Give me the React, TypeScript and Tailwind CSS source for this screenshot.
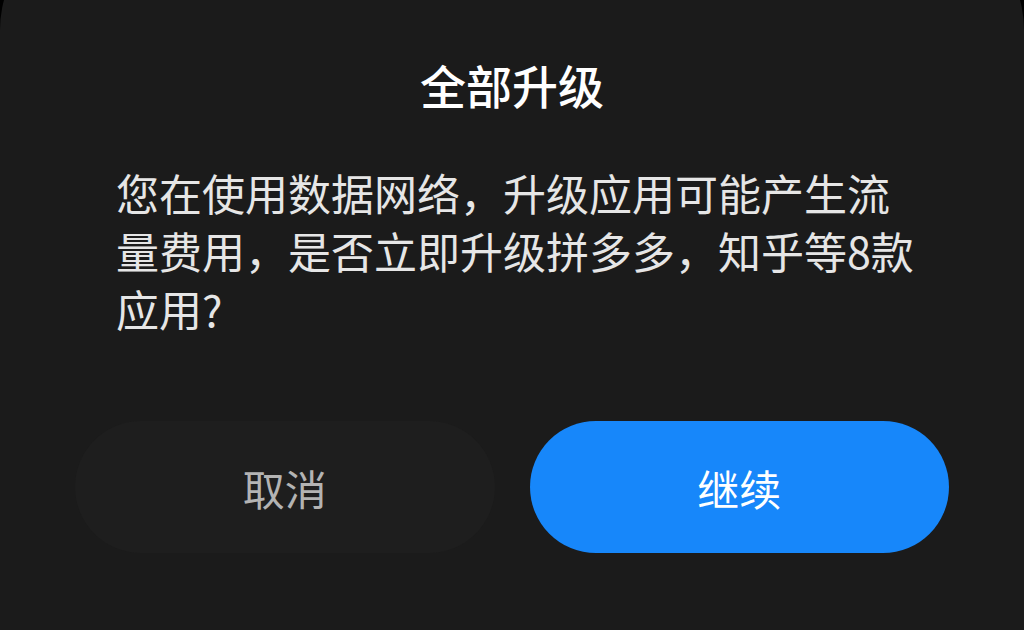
import React from 'react';

const App: React.FC = () => {
  return (
    <div className="w-[1024px] h-[630px] bg-black overflow-hidden" style={{ fontFamily: '"Noto Sans CJK SC", "Noto Sans", sans-serif' }}>
      {/* Dialog sheet, top edge sits above the viewport */}
      <div className="-mt-[85px] h-[715px] rounded-t-[115px] bg-[#1b1b1b] pt-[139px] flex flex-col">
        <h1 className="text-center text-[46px] leading-[60px] font-medium text-white">全部升级</h1>

        <p className="mt-[49px] pl-[116px] pr-[106px] text-[43px] leading-[58px] text-[#e6e6e6]">
          您在使用数据网络，升级应用可能产生流量费用，是否立即升级拼多多，知乎等8款应用?
        </p>

        {/* Actions */}
        <div className="mt-[84px] px-[75px] flex gap-[35px]">
          <button className="flex-1 h-[132px] rounded-full bg-[#1e1e1e] text-[42px] text-[#b3b3b3]">
            取消
          </button>
          <button className="flex-1 h-[132px] rounded-full bg-[#1787fa] text-[42px] text-white">
            继续
          </button>
        </div>
      </div>
    </div>
  );
};

export default App;
